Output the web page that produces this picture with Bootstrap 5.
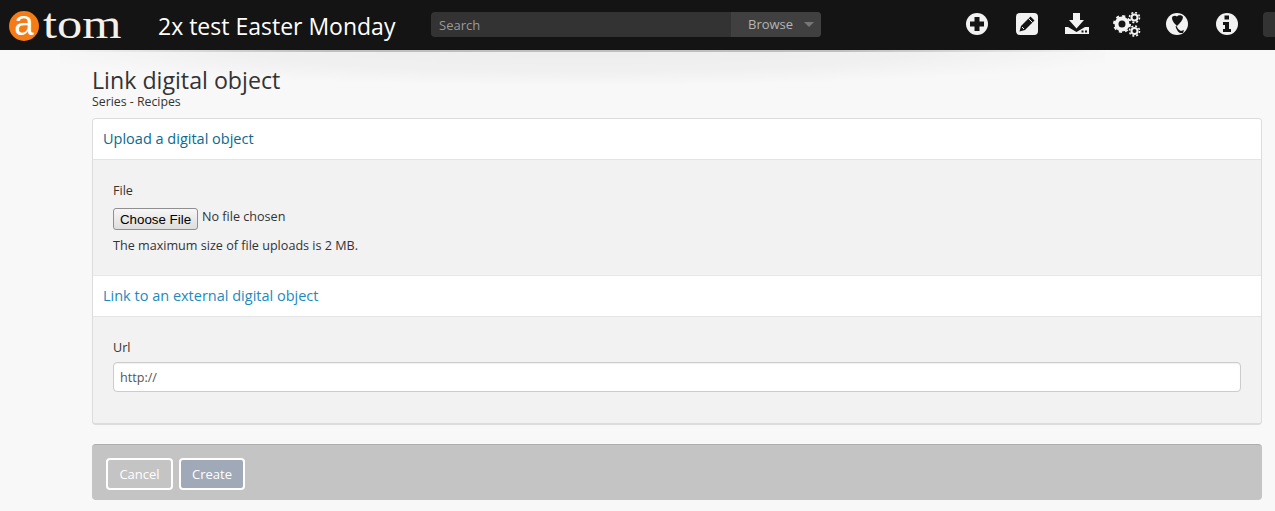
<!DOCTYPE html>
<html lang="en">
<head>
    <meta charset="UTF-8">
    <title>Link digital object</title>
    <link href="https://cdn.jsdelivr.net/npm/bootstrap@5.3.3/dist/css/bootstrap.min.css" rel="stylesheet">
    <style>
        body {
            background: #f8f8f8;
            font-family: "Open Sans", sans-serif;
            font-size: 12.6px;
            color: #333;
            overflow: hidden;
        }
        .top-bar {
            height: 50px;
            background: #141414;
            padding: 0;
            flex-wrap: nowrap;
            justify-content: flex-start;
            position: relative;
        }
        .top-bar > * {
            flex-shrink: 0;
        }
        /* soft shadow under the bar, strongest in the middle */
        .top-bar::after {
            content: "";
            position: absolute;
            left: 60px;
            right: 170px;
            top: 50px;
            height: 36px;
            background:
                linear-gradient(to right, transparent, rgba(0, 0, 0, .2) 25%, rgba(0, 0, 0, .2) 75%, transparent) top / 100% 2px no-repeat,
                radial-gradient(ellipse 55% 100% at 50% 0, rgba(0, 0, 0, .045) 0, rgba(0, 0, 0, .03) 60%, transparent 100%);
            pointer-events: none;
        }
        .logo-wrap {
            width: 158px;
            padding-left: 9px;
            color: #f4f1ea;
            text-decoration: none;
        }
        .logo-dot {
            width: 30px;
            height: 30px;
            margin-top: 2px;
            border-radius: 50%;
            background: #f47b16;
            color: #fff;
            font: 400 35px/24px "Liberation Sans", sans-serif;
            text-align: center;
        }
        .logo-rest {
            font: 42px/30px "Liberation Serif", serif;
            margin: 0 0 0 4px;
            transform: scaleX(1.2);
            transform-origin: left;
        }
        .site-title {
            width: 273px;
            font-size: 23px;
            line-height: 30px;
            color: #fff;
            margin-top: 1px;
        }
        .search-box {
            width: 390px;
            height: 25px;
            margin-bottom: 1px;
            border-radius: 4px;
            overflow: hidden;
            background: #333;
        }
        .search-input {
            flex: 1;
            padding-left: 8px;
            color: #9a9a9a;
            font-size: 13px;
            line-height: 26px;
        }
        .browse-btn {
            width: 90px;
            background: #404040;
            color: #b4b4b4;
            font-size: 13px;
            line-height: 24px;
            padding-left: 17px;
        }
        .browse-caret {
            width: 0;
            height: 0;
            margin-left: 11px;
            border: 5px solid transparent;
            border-top: 5px solid #777;
            border-bottom: 0;
            display: inline-block;
            vertical-align: 2px;
        }
        .icon-row {
            margin: 0 0 2px 144px;
            gap: 26px;
        }
        .icon-row svg {
            display: block;
        }
        .gear-icon {
            margin: 0 -2px;
        }
        .user-stub {
            width: 14px;
            height: 25px;
            margin: 0 0 1px 24px;
            border-radius: 4px 0 0 4px;
            background: #333;
        }
        .page-wrap {
            margin: 0 13px 0 92px;
            padding-top: 17px;
        }
        .page-title {
            font-size: 23.2px;
            line-height: 27px;
            font-weight: 400;
            color: #333;
            margin: 0;
        }
        .page-sub {
            font-size: 12.3px;
            line-height: 15px;
            margin-bottom: 9px;
        }
        .form-card {
            border: 1px solid #dcdcdc;
            border-bottom-width: 2px;
            border-radius: 4px;
            background: #f2f2f2;
        }
        .form-card .card-header {
            height: 41px;
            padding: 0 10px;
            background: #fff;
            border-bottom: 1px solid #e4e4e4;
            border-radius: 3px 3px 0 0;
            font-size: 14.5px;
            line-height: 40px;
            color: #0a6a8f;
        }
        .form-card .head-open {
            color: #1c8abf;
        }
        .upload-body {
            height: 115px;
            padding: 22px 20px 0;
        }
        .form-card .form-label {
            line-height: 17px;
            margin-bottom: 6px;
            display: block;
        }
        .file-input {
            display: block;
            height: 26px;
            font-size: 12.6px;
            line-height: 14px;
            color: #333;
        }
        .file-input::file-selector-button {
            position: relative;
            top: 3px;
            height: 22px;
            width: 85px;
            margin: 0 4px 0 0;
            padding: 0;
            font: 13.33px "Liberation Sans", sans-serif;
            color: #000;
            background: linear-gradient(#f6f6f6, #dedede);
            border: 1px solid #8f8f8f;
            border-radius: 3px;
        }
        .size-note {
            margin-top: 6px;
            line-height: 17px;
        }
        .form-card .second-header {
            height: 42px;
            border-top: 1px solid #e8e8e8;
            border-radius: 0;
        }
        .url-body {
            height: 106px;
            padding: 22px 20px 0;
        }
        .url-input {
            height: 30px;
            padding: 0 6px;
            border: 1px solid #ccc;
            border-radius: 4px;
            font-size: 12.6px;
            color: #555;
            box-shadow: inset 0 1px 1px rgba(0, 0, 0, .06);
        }
        .action-bar {
            height: 56px;
            margin-top: 19px;
            padding: 13px 14px;
            gap: 6px;
            background: #c4c4c4;
            border-top: 1px solid #adadad;
            border-radius: 4px;
        }
        .action-btn {
            width: 67px;
            height: 32px;
            padding: 0;
            border: 2px solid #fff;
            border-radius: 4px;
            color: #fff;
            font-size: 13px;
            line-height: 28px;
            background: transparent;
        }
        .action-main {
            width: 66px;
            background: #a0a9b8;
        }
    </style>
</head>
<body>
    <nav class="navbar top-bar align-items-center">
        <a class="logo-wrap d-flex" href="#">
            <div class="logo-dot">a</div>
            <div class="logo-rest">tom</div>
        </a>
        <div class="site-title">2x test Easter Monday</div>
        <div class="search-box d-flex">
            <div class="search-input">Search</div>
            <div class="browse-btn">Browse<span class="browse-caret"></span></div>
        </div>
        <div class="icon-row d-flex align-items-center">
            <svg width="24" height="24" viewBox="0 0 24 24"><circle cx="12" cy="12" r="11" fill="#f2f2f2"/><path d="M9.500 5h5v4.500H19v5h-4.500V19h-5v-4.500H5v-5h4.500z" fill="#141414"/></svg>
            <svg width="24" height="24" viewBox="0 0 24 24"><rect x="1" y="1" width="22" height="22" rx="4" fill="#f2f2f2"/><path d="M4.500 19.500l1.500-5.500 9.500-9.500 4 4-9.500 9.500z" fill="#141414"/><path d="M13.500 6.500l4 4M7 15l2 2" stroke="#f2f2f2" fill="none"/></svg>
            <svg width="24" height="22" viewBox="0 0 24 22"><path d="M8 0h7v7h4l-7.500 8.500L4 7h4z" fill="#f2f2f2"/><path d="M0 14h3l8.500 5 8.500-5h4v7H0z" fill="#f2f2f2"/><rect x="16.500" y="17.500" width="2" height="2" fill="#141414"/><rect x="20" y="17.500" width="2" height="2" fill="#141414"/></svg>
            <svg class="gear-icon" width="28" height="25" viewBox="0 0 28 25"><g fill="none" stroke="#f2f2f2"><circle cx="9" cy="12" r="5.500" stroke-width="4"/><circle cx="9" cy="12" r="8" stroke-width="2" stroke-dasharray="3.100 3.180"/><circle cx="21.500" cy="5.500" r="3" stroke-width="2"/><circle cx="21.500" cy="5.500" r="5" stroke-width="1.600" stroke-dasharray="2 1.930"/><circle cx="21.500" cy="19" r="3" stroke-width="2"/><circle cx="21.500" cy="19" r="5" stroke-width="1.600" stroke-dasharray="2 1.930"/></g></svg>
            <svg width="24" height="24" viewBox="0 0 24 24"><circle cx="12" cy="12" r="11" fill="#f2f2f2"/><path d="M7 6c0-2 3-3 5-1.500 1-1.500 5-2 6 .5 0 3-3 6-6 9-2-2-5-5-5-8z" fill="#141414"/><path d="M11.500 14c1 2 2 4 4.500 5l3-1-1 3-3 0c-2.500-1-3.500-4-4.500-6.500z" fill="#141414"/></svg>
            <svg width="24" height="24" viewBox="0 0 24 24"><circle cx="12" cy="12" r="11" fill="#f2f2f2"/><path d="M9.500 3.500h4.500v4H9.500zM8 10h6v7h2v3H8v-3h2v-4H8z" fill="#141414"/></svg>
        </div>
        <div class="user-stub"></div>
    </nav>

    <main class="page-wrap">
        <h1 class="page-title">Link digital object</h1>
        <div class="page-sub">Series - Recipes</div>

        <div class="card form-card">
            <div class="card-header">Upload a digital object</div>
            <div class="upload-body">
                <label class="form-label" for="fileField">File</label>
                <input class="file-input" id="fileField" type="file">
                <div class="size-note">The maximum size of file uploads is 2 MB.</div>
            </div>
            <div class="card-header second-header head-open">Link to an external digital object</div>
            <div class="url-body">
                <label class="form-label" for="urlField">Url</label>
                <input class="form-control url-input" id="urlField" type="text" value="http://">
            </div>
        </div>

        <div class="action-bar d-flex">
            <a class="btn action-btn" href="#">Cancel</a>
            <button class="btn action-btn action-main" type="button">Create</button>
        </div>
    </main>

    <script src="https://cdn.jsdelivr.net/npm/bootstrap@5.3.3/dist/js/bootstrap.bundle.min.js"></script>
</body>
</html>
